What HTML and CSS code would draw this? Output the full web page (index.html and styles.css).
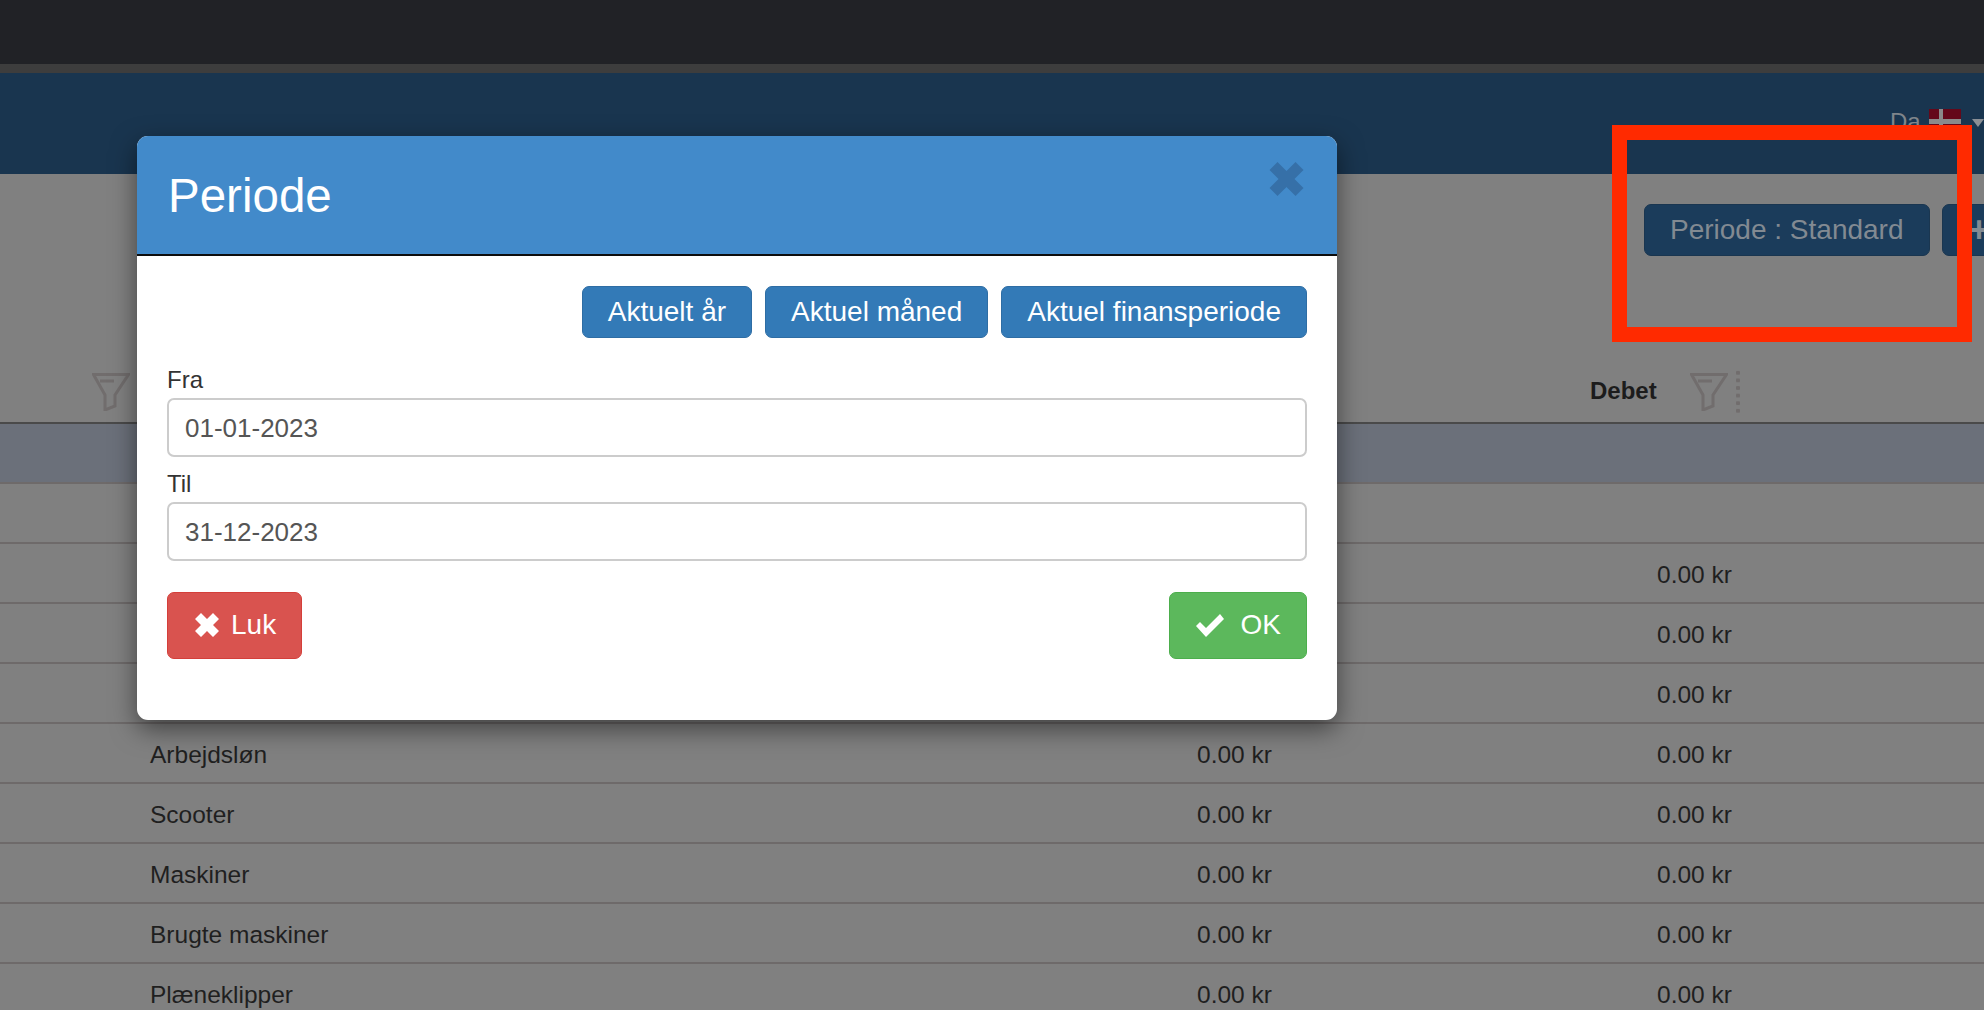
FILE: index.html
```html
<!DOCTYPE html>
<html lang="da">
<head>
<meta charset="utf-8">
<title>Periode</title>
<link rel="stylesheet" href="styles.css">
</head>
<body>
<div class="page">
  <div class="topbar"></div>
  <div class="strip"></div>
  <header class="appbar">
    <span class="lang">Da</span>
    <svg class="flag" viewBox="0 0 32 24"><rect width="32" height="24" fill="#64081a"/><rect x="10" width="4" height="24" fill="#8a8a8a"/><rect y="10" width="32" height="5" fill="#8a8a8a"/></svg>
    <span class="caret"></span>
  </header>
  <div class="toolbar">
    <span class="tool-btn">Periode : Standard</span>
    <span class="tool-btn tool-plus">+</span>
  </div>
  <div class="thead">
    <span class="cell-filter">
      <svg class="funnel" viewBox="0 0 38 38"><path d="M1.5 1.5H36.5L23 22V33L13 37V22Z"/><path d="M8 8H22"/></svg>
    </span>
    <span class="debet-head">
      <span class="debet-label">Debet</span>
      <svg class="funnel" viewBox="0 0 38 38"><path d="M1.5 1.5H36.5L23 22V33L13 37V22Z"/><path d="M8 8H22"/></svg>
      <span class="dots"></span>
    </span>
  </div>
  <div class="band"></div>
  <div class="row"></div>
  <div class="row"><span></span><span></span><span></span><span>0.00 kr</span></div>
  <div class="row"><span></span><span></span><span></span><span>0.00 kr</span></div>
  <div class="row"><span></span><span></span><span></span><span>0.00 kr</span></div>
  <div class="row"><span></span><span>Arbejdsløn</span><span>0.00 kr</span><span>0.00 kr</span></div>
  <div class="row"><span></span><span>Scooter</span><span>0.00 kr</span><span>0.00 kr</span></div>
  <div class="row"><span></span><span>Maskiner</span><span>0.00 kr</span><span>0.00 kr</span></div>
  <div class="row"><span></span><span>Brugte maskiner</span><span>0.00 kr</span><span>0.00 kr</span></div>
  <div class="row"><span></span><span>Plæneklipper</span><span>0.00 kr</span><span>0.00 kr</span></div>
</div>

<section class="modal">
  <div class="modal-head">
    <h1 class="modal-title">Periode</h1>
    <svg class="close-x" viewBox="0 0 34 36"><path class="close-shade" d="M8 1 17 10 26 1 34 9 25 18 34 27 26 35 17 26 8 35 0 27 9 18 0 9Z"/></svg>
  </div>
  <div class="modal-body">
    <div class="quick">
      <button class="btn btn-blue">Aktuelt år</button>
      <button class="btn btn-blue">Aktuel måned</button>
      <button class="btn btn-blue">Aktuel finansperiode</button>
    </div>
    <label class="field-label">Fra</label>
    <input class="field" value="01-01-2023">
    <label class="field-label field-label-next">Til</label>
    <input class="field" value="31-12-2023">
    <div class="actions">
      <button class="btn btn-red btn-tall">
        <svg class="ico-x" viewBox="0 0 24 24"><path d="M6 0 12 6 18 0 24 6 18 12 24 18 18 24 12 18 6 24 0 18 6 12 0 6Z"/></svg>
        Luk
      </button>
      <button class="btn btn-green btn-tall">
        <svg class="ico-check" viewBox="0 0 28 24"><path d="M0 13 4 9 10 15 24 1 28 6 10 24Z"/></svg>
        OK
      </button>
    </div>
  </div>
</section>

<div class="annotation"></div>
</body>
</html>
```
FILE: styles.css
```css
* { box-sizing: border-box; }
html, body { margin: 0; height: 100%; overflow: hidden; }
body { font-family: "Liberation Sans", Arial, sans-serif; background: #808080; color: #1f1f1f; }

.page { width: 1984px; }
.topbar { height: 64px; background: #212226; }
.strip { height: 9px; background: #3d3d3d; }

.appbar { height: 101px; background: #19354f; display: flex; align-items: flex-start; padding: 36px 0 0 1890px; }
.lang { font-size: 24px; line-height: 26px; color: #7f858b; width: 39px; flex: none; }
.flag { width: 32px; height: 24px; flex: none; }
.caret { margin: 10px 0 0 11px; border: 6.5px solid transparent; border-top: 8px solid #8a8f95; border-bottom: 0; flex: none; }

.toolbar { height: 190px; display: flex; gap: 12px; padding: 30px 0 0 1644px; }
.tool-btn { height: 52px; flex: none; background: #1b3c5b; border: 1px solid #1a3650; border-radius: 7px; color: #828a92; font-size: 28px; line-height: 50px; padding: 0 25px; }
.tool-plus { font-weight: 700; font-size: 36px; padding: 0 20px 0 26px; }

.thead { height: 60px; border-bottom: 2px solid #4a4a4a; display: grid; grid-template-columns: 1498px 1fr; padding-left: 92px; }
.cell-filter { display: block; }
.debet-head { display: flex; align-items: flex-start; }
.debet-label { font-size: 24px; font-weight: 700; line-height: 28px; width: 100px; padding-top: 13px; color: #1c1c1c; }
.funnel { display: block; width: 38px; height: 38px; margin-top: 9px; fill: none; stroke: #716d6d; stroke-width: 3; flex: none; }
.dots { margin: 5px 0 0 8px; width: 4px; height: 46px; background-image: radial-gradient(circle, #716d6d 2px, transparent 2.3px); background-size: 4px 7.6px; }

.band { height: 60px; background: #6b707a; border-bottom: 2px solid #6e6a6a; }
.row { height: 60px; padding-top: 3px; border-bottom: 2px solid #6e6a6a; display: grid; grid-template-columns: 150px 1047px 460px 1fr; align-items: center; font-size: 24.5px; color: #1f1f1f; }

.modal { position: absolute; left: 137px; top: 136px; width: 1200px; height: 584px; background: #fff; border-radius: 11px; box-shadow: 0 9px 26px rgba(0, 0, 0, .5); }
.modal-head { height: 120px; background: #428aca; border-bottom: 2px solid #0d0d0d; border-radius: 11px 11px 0 0; display: flex; justify-content: space-between; padding: 25px 33px 0 31px; }
.modal-title { margin: 7px 0 0; font-size: 47.5px; font-weight: 400; line-height: 56px; color: #fff; }
.close-x { width: 35px; height: 36px; flex: none; }
.close-shade { fill: #3670a8; }

.modal-body { padding: 30px 30px 0; }
.quick { display: flex; justify-content: flex-end; gap: 13px; margin-bottom: 26px; }
.btn { font-family: inherit; height: 52px; border-radius: 7px; border: 1px solid; color: #fff; font-size: 28px; padding: 0 25px; display: inline-flex; align-items: center; }
.btn-blue { background: #337ab7; border-color: #2e6da4; }
.btn-tall { height: 67px; padding-bottom: 2px; }
.btn-red { background: #d9534f; border-color: #d43f3a; padding-left: 27px; padding-right: 25px; gap: 12px; }
.btn-green { background: #5cb85c; border-color: #4cae4c; padding-left: 26px; padding-right: 25px; gap: 17px; }
.ico-x { width: 24px; height: 24px; fill: #fff; }
.ico-check { width: 28px; height: 24px; fill: #fff; }

.field-label { display: block; font-size: 24px; line-height: 32px; margin-bottom: 2px; color: #333; }
.field-label-next { margin-top: 11px; }
.field { display: block; width: 100%; height: 59px; border: 2px solid #ccc; border-radius: 7px; padding: 1px 16px 0; font-family: inherit; font-size: 26px; color: #555; background: #fff; outline: none; }

.actions { display: flex; justify-content: space-between; margin-top: 31px; }

.annotation { position: absolute; left: 1612px; top: 125px; width: 360px; height: 217px; border: 15px solid #ff2a00; }
```
